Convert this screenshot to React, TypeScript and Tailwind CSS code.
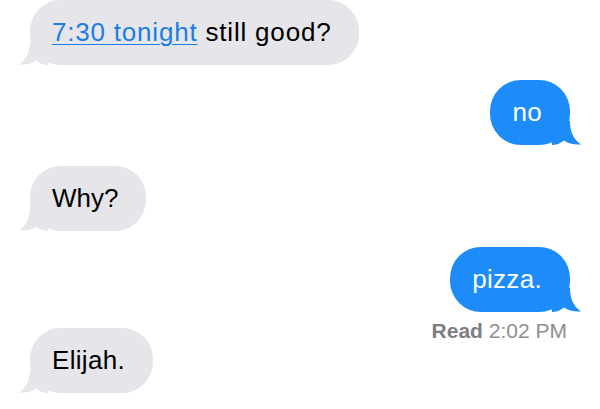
import type { ReactNode } from "react";

type Side = "in" | "out";

function Tail({ side }: { side: Side }) {
  const fill = side === "in" ? "#e5e5ea" : "#1d8cf8";
  return (
    <svg
      viewBox="0 0 30 24"
      className={
        side === "in"
          ? "absolute bottom-0 left-[-12px] h-[24px] w-[30px]"
          : "absolute bottom-0 right-[-12px] h-[24px] w-[30px] -scale-x-100"
      }
      aria-hidden
    >
      <path
        d="M12 0 C12 10 9 18 1 23.5 C8 24 14 22.5 18 19.5 C22 22.5 26 24 30 24 L30 0 Z"
        fill={fill}
      />
    </svg>
  );
}

function Bubble({
  side,
  className,
  children,
}: {
  side: Side;
  className?: string;
  children: ReactNode;
}) {
  const isIn = side === "in";
  return (
    <div className={isIn ? `flex justify-start pl-[30px] ${className ?? ""}` : `flex justify-end pr-[30px] ${className ?? ""}`}>
      <div
        className={
          isIn
            ? "relative flex h-[65px] items-center rounded-[31px] bg-[#e5e5ea] pl-[22px] pr-[28px] text-[26px] text-black"
            : "relative flex h-[65px] items-center rounded-[31px] bg-[#1d8cf8] pl-[22px] pr-[28px] text-[26px] text-white"
        }
      >
        <Tail side={side} />
        <span className="relative">{children}</span>
      </div>
    </div>
  );
}

export default function App() {
  return (
    <div className="h-[409px] w-[600px] overflow-hidden bg-white font-['Liberation_Sans',Arial,sans-serif] tracking-[0.02em]">
      <div className="flex flex-col">
        <Bubble side="in" className="tracking-[0.05em]">
          <a href="#" className="text-[#1a7ee6] underline decoration-1 underline-offset-[3px]">
            7:30 tonight
          </a>{" "}
          still good?
        </Bubble>
        <Bubble side="out" className="mt-[15px]">
          no
        </Bubble>
        <Bubble side="in" className="mt-[21px] tracking-normal">
          Why?
        </Bubble>
        <Bubble side="out" className="mt-[16px]">
          pizza.
        </Bubble>
        <div className="mt-[7px] flex h-[24px] justify-end pr-[33px] text-[21px] leading-[24px] tracking-normal text-[#8e8e93]">
          <span className="font-bold text-[#7d7d82]">Read</span>
          <span>&nbsp;2:02 PM</span>
        </div>
        <Bubble side="in" className="mt-[-15px]">
          Elijah.
        </Bubble>
      </div>
    </div>
  );
}
